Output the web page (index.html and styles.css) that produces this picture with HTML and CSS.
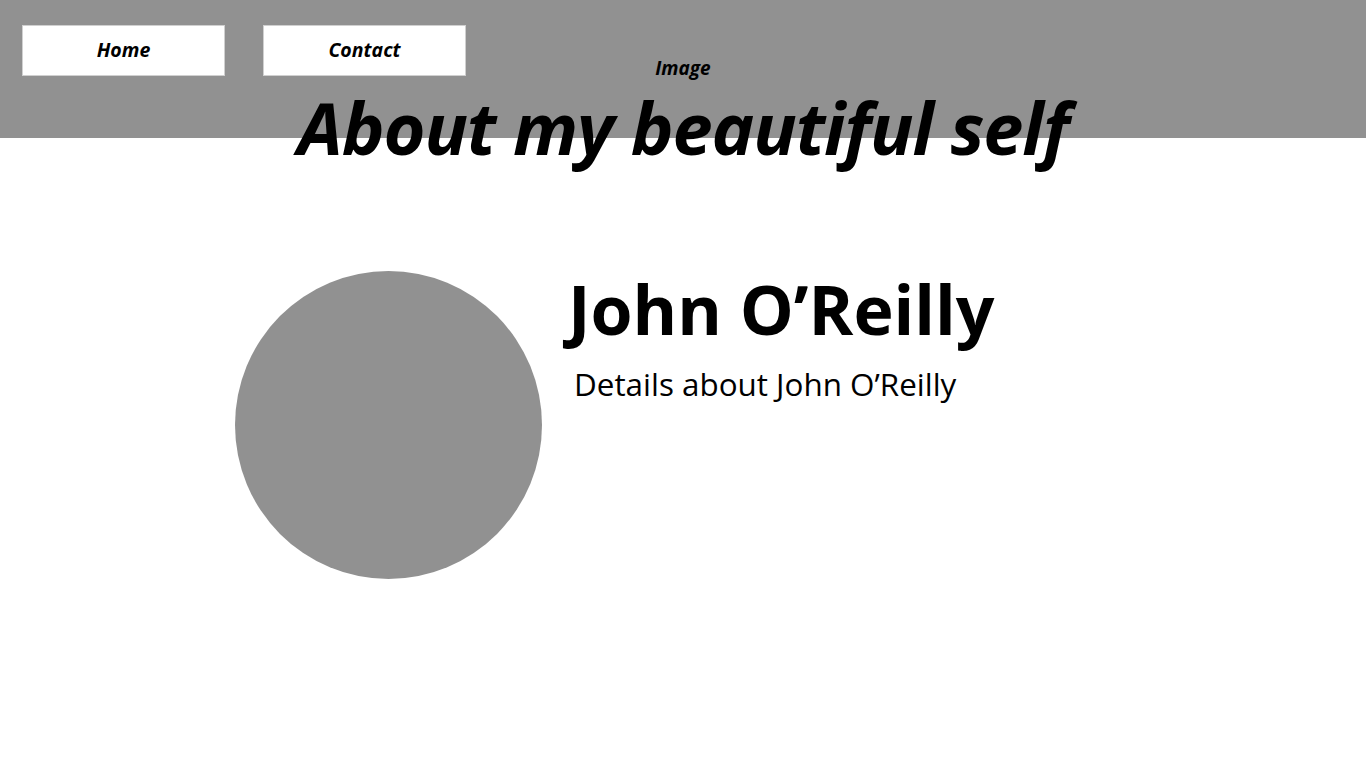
FILE: index.html
```html
<!DOCTYPE html>
<html lang="en">
<head>
<meta charset="utf-8">
<title>About</title>
<link rel="stylesheet" href="styles.css">
</head>
<body>
<header class="banner">
  <nav class="nav">
    <a class="nav-btn" href="#">Home</a>
    <a class="nav-btn" href="#">Contact</a>
  </nav>
  <div class="image-label">Image</div>
  <h1 class="title">About my beautiful self</h1>
</header>
<main class="profile">
  <div class="avatar"></div>
  <div class="info">
    <h2 class="name">John O’Reilly</h2>
    <p class="details">Details about John O’Reilly</p>
  </div>
</main>
</body>
</html>
```
FILE: styles.css
```css
* { box-sizing: border-box; }
html, body { margin: 0; padding: 0; }
body {
  width: 1366px;
  height: 768px;
  background: #ffffff;
  font-family: "Open Sans", "Noto Sans", sans-serif;
  color: #000;
  overflow: hidden;
}
.banner {
  position: relative;
  height: 138px;
  background: #919191;
}
.nav {
  display: flex;
  gap: 38px;
  padding: 25px 0 0 22px;
}
.nav-btn {
  display: flex;
  align-items: center;
  justify-content: center;
  width: 203px;
  height: 51px;
  padding-bottom: 2px;
  background: #fff;
  border: 1px solid #d0d0d0;
  color: #000;
  text-decoration: none;
  font-weight: 700;
  font-style: italic;
  font-size: 19.5px;
}
.image-label {
  position: absolute;
  left: 0;
  right: 0;
  top: 57px;
  text-align: center;
  font-weight: 700;
  font-style: italic;
  font-size: 19px;
  line-height: 22px;
}
.title {
  position: absolute;
  left: 0;
  right: 0;
  top: 91px;
  margin: 0;
  text-align: center;
  font-weight: 700;
  font-style: italic;
  font-size: 72px;
  line-height: 72px;
  letter-spacing: -1.1px;
}
.profile {
  display: flex;
  align-items: flex-start;
  gap: 26px;
  padding: 133px 0 0 235px;
}
.avatar {
  width: 307px;
  height: 308px;
  border-radius: 50%;
  background: #919191;
  flex: none;
}
.name {
  margin: -2px 0 0;
  font-weight: 700;
  font-size: 68px;
  line-height: 80px;
}
.details {
  margin: 15px 0 0 6px;
  font-size: 31.4px;
  line-height: 40px;
}
```
